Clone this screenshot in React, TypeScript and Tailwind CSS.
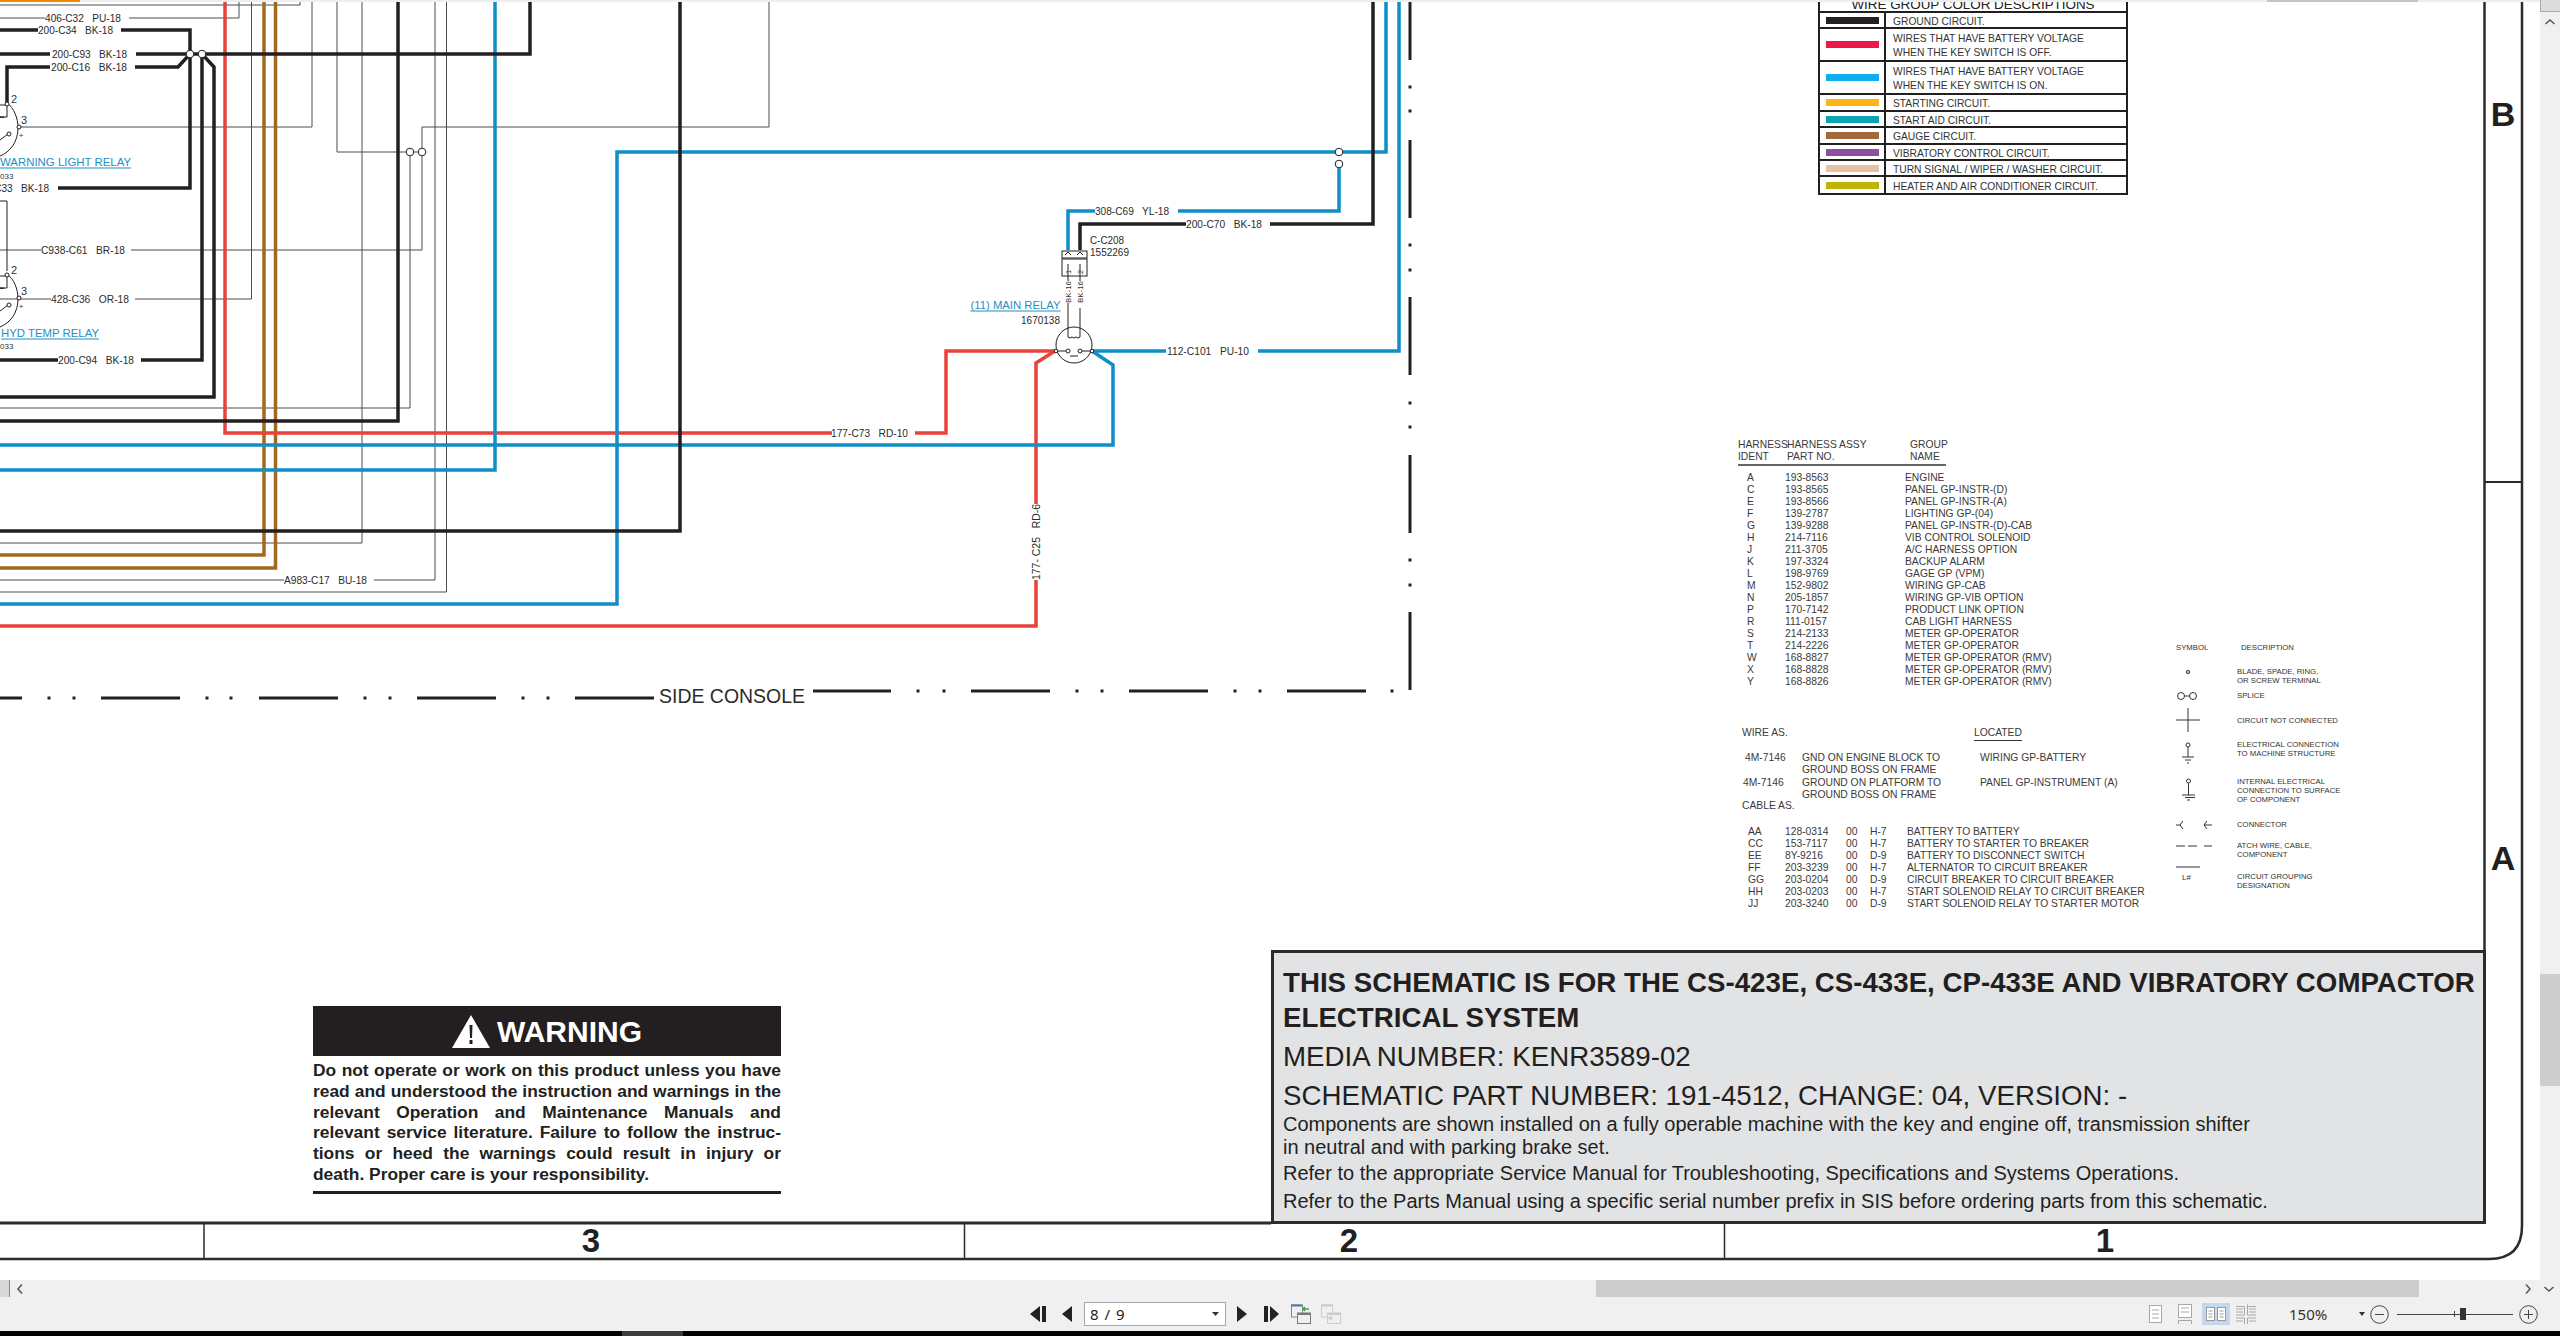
const font = "font-['Liberation_Sans',Arial,sans-serif]";

const BLACK = "#231f20";
const BLUE = "#0f8fc8";
const RED = "#e8423a";
const BROWN = "#a0691e";
const THIN = "#4d4d4d";

const wires: [string, string, number][] = [
  ["M0 5H300V0", THIN, 1],
  ["M0 18H45M129 18H239V0", THIN, 1],
  ["M19 127H312V0", THIN, 1],
  ["M0 250H41M131 250H422V127H769V0", THIN, 1],
  ["M337 0V152H422", THIN, 1],
  ["M410 152V408H0", THIN, 1],
  ["M0 299H51M135 299H251.5V0", THIN, 1],
  ["M362 0V543H0", THIN, 1],
  ["M435 0V580H374M284 580H0", THIN, 1],
  ["M446.5 0V592H0", THIN, 1],
  ["M264 0V555H0", BROWN, 3.5],
  ["M275.5 0V568H0", BROWN, 3.5],
  ["M225 0V433H832M915 433H946V351H1055", RED, 3.5],
  ["M1055 351L1036 363V504M1036 580V626H0", RED, 3.5],
  ["M1386 0V152H617V604H0", BLUE, 3.5],
  ["M0 470H495V0", BLUE, 3.5],
  ["M0 445H1113V365L1092 351", BLUE, 3.5],
  ["M1339 164V211H1178M1095 211H1068V250", BLUE, 3.5],
  ["M1092 351H1166M1258 351H1399V0", BLUE, 3.5],
  ["M0 30H38M121 30H190V188H58", BLACK, 3.5],
  ["M0 54H50M136 54H530V0", BLACK, 3.5],
  ["M7 103V67H50M135 67H178L190 54", BLACK, 3.5],
  ["M202 54V360H141M58 360H0", BLACK, 3.5],
  ["M202 54L214 67V397H0", BLACK, 3.5],
  ["M398 0V421H0", BLACK, 3.5],
  ["M680 0V531H0", BLACK, 3.5],
  ["M1373 0V224H1270M1186 224H1080V250", BLACK, 3.5],
];

const labels: [string, number, number, number][] = [
  ["406-C32   PU-18", 45, 18, 76],
  ["200-C34   BK-18", 38, 30, 75],
  ["200-C93   BK-18", 52, 54, 75],
  ["200-C16   BK-18", 51, 67, 76],
  ["200-C33   BK-18", -26, 188, 75],
  ["C938-C61   BR-18", 41, 250, 84],
  ["428-C36   OR-18", 51, 299, 78],
  ["200-C94   BK-18", 58, 360, 76],
  ["A983-C17   BU-18", 284, 580, 83],
  ["177-C73   RD-10", 831, 433, 77],
  ["308-C69   YL-18", 1095, 211, 74],
  ["200-C70   BK-18", 1186, 224, 76],
  ["112-C101   PU-10", 1167, 351, 82],
  ["C-C208", 1090, 240, 34],
  ["1552269", 1090, 252, 39],
  ["1670138", 1021, 320, 39],
];

const links: [string, number, number, number][] = [
  ["WARNING LIGHT RELAY", 0, 162, 131],
  ["HYD TEMP RELAY", 1, 333, 98],
  ["(11) MAIN RELAY", 970.5, 305, 90],
];

// dashes of the side console border
const vDash = [[0, 60], [140, 218], [297, 375], [455, 533], [612, 690]];
const vDots = [87, 111, 245, 270, 403, 427, 560, 585];
const hDashLeft = [[0, 22], [101, 180], [259, 338], [417, 496], [575, 654]];
const hDotsLeft = [49, 74, 207, 231, 365, 390, 523, 548];
const hDashRight = [[813, 891], [971, 1050], [1129, 1208], [1287, 1366]];
const hDotsRight = [918, 944, 1077, 1102, 1235, 1260, 1392];

const splices = [[190, 54], [202, 54], [410, 152], [422, 152], [1339, 152], [1339, 164]];

function Relay({ dy }: { dy: number }) {
  return (
    <g transform={`translate(0 ${dy})`} fill="none" stroke={BLACK} strokeWidth="1">
      <path d="M7 103C14 108 18 118 18 128C18 142 10 152 0 156" />
      <path d="M0 105H7V117H0M0 118q1 -3 2 0q1 -3 2 0" />
      <path d="M0 140L8 134" />
      <circle cx="9" cy="134" r="2" fill="white" />
      <circle cx="7" cy="104" r="2" fill="white" />
      <circle cx="19" cy="127" r="2" fill="white" />
      <text x="14" y="99" fontSize="11" fill="#333" stroke="none" textAnchor="middle" dominantBaseline="central">2</text>
      <text x="24" y="120" fontSize="11" fill="#333" stroke="none" textAnchor="middle" dominantBaseline="central">3</text>
      <text x="21" y="135" fontSize="8" fill="#333" stroke="none" textAnchor="middle" dominantBaseline="central">+</text>
    </g>
  );
}

function Schematic() {
  return (
    <svg width="2540" height="1280" viewBox="0 0 2540 1280" className={`absolute left-0 top-0 ${font}`}>
      {wires.map(([d, color, w], i) => (
        <path key={i} d={d} fill="none" stroke={color} strokeWidth={w} />
      ))}

      {splices.map(([x, y], i) => (
        <circle key={i} cx={x} cy={y} r="3.8" fill="white" stroke={BLACK} strokeWidth="1" />
      ))}

      {labels.map(([t, x, y, w], i) => (
        <text key={i} x={x} y={y} fontSize="10.5" fill="#2b2b2b" dominantBaseline="central" textLength={w} lengthAdjust="spacingAndGlyphs" className="whitespace-pre">
          {t}
        </text>
      ))}

      {links.map(([t, x, y, w], i) => (
        <g key={i}>
          <text x={x} y={y} fontSize="11.5" fill="#1f8fc4" dominantBaseline="central" textLength={w} lengthAdjust="spacingAndGlyphs">
            {t}
          </text>
          <path d={`M${x} ${y + 6}h${w}`} stroke="#1f8fc4" strokeWidth="1" />
        </g>
      ))}

      <text x="0" y="176" fontSize="8" fill="#333" dominantBaseline="central">033</text>
      <text x="0" y="346" fontSize="8" fill="#333" dominantBaseline="central">033</text>
      <Relay dy={0} />
      <Relay dy={171} />
      <path d="M0 201H7V271" fill="none" stroke={BLACK} strokeWidth="1" />

      {/* main relay and connector */}
      <g fill="none" stroke={BLACK} strokeWidth="1">
        <rect x="1062" y="251" width="25" height="7" />
        <rect x="1062" y="259" width="25" height="17" />
        <path d="M1068 264V276M1080 264V276M1065 255l3 -3l3 3M1077 255l3 -3l3 3M1068 303V328M1080 308V328" />
        <path d="M1068 276V281M1080 276V281" />
        <circle cx="1074" cy="345" r="18" />
        <path d="M1068 328V337q2 2 4 0q2 2 4 0q2 2 4 0V328" />
        <path d="M1057 351H1066M1082 351H1091M1070 356H1078" />
        <circle cx="1068" cy="351" r="2" fill="white" />
        <circle cx="1080" cy="351" r="2" fill="white" />
        <circle cx="1056" cy="351" r="1.8" fill="white" />
        <circle cx="1092" cy="351" r="1.8" fill="white" />
      </g>
      <text transform="rotate(-90 1068 303)" x="1068" y="303" fontSize="7.5" fill="#333" dominantBaseline="central" textLength="22" lengthAdjust="spacingAndGlyphs">BK-16</text>
      <text transform="rotate(-90 1080 303)" x="1080" y="303" fontSize="7.5" fill="#333" dominantBaseline="central" textLength="22" lengthAdjust="spacingAndGlyphs">BK-16</text>
      <text transform="rotate(-90 1068 274)" x="1068" y="274" fontSize="7.5" fill="#333" dominantBaseline="central">1</text>
      <text transform="rotate(-90 1080 274)" x="1080" y="274" fontSize="7.5" fill="#333" dominantBaseline="central">2</text>
      <text transform="rotate(-90 1036 580)" x="1036" y="580" fontSize="10.5" fill="#2b2b2b" dominantBaseline="central" textLength="76" lengthAdjust="spacingAndGlyphs" className="whitespace-pre">177- C25   RD-6</text>

      {/* side console border */}
      <g stroke={BLACK} strokeWidth="3" fill="none">
        {vDash.map(([a, b], i) => <path key={i} d={`M1410 ${a}V${b}`} />)}
        {vDots.map((y, i) => <path key={i} d={`M1410 ${y - 1.5}V${y + 1.5}`} />)}
        {hDashLeft.map(([a, b], i) => <path key={i} d={`M${a} 698H${b}`} />)}
        {hDotsLeft.map((x, i) => <path key={i} d={`M${x - 1.5} 698h3`} />)}
        {hDashRight.map(([a, b], i) => <path key={i} d={`M${a} 691H${b}`} />)}
        {hDotsRight.map((x, i) => <path key={i} d={`M${x - 1.5} 691h3`} />)}
      </g>
      <text x="659" y="696" fontSize="20" fill="#2b2b2b" dominantBaseline="central" textLength="146" lengthAdjust="spacingAndGlyphs">SIDE CONSOLE</text>

      {/* drawing frame */}
      <g stroke="#2b2b2b" fill="none">
        <path d="M2484.5 0V950" strokeWidth="2.5" />
        <path d="M2484.5 482H2522" strokeWidth="2" />
        <path d="M0 1223H1271" strokeWidth="3" />
        <path d="M0 1259H2489Q2522 1259 2522 1226V0" strokeWidth="2.5" />
        <path d="M204 1223V1259M964.5 1223V1259M1724.5 1223V1259" strokeWidth="1.5" />
      </g>
      <text x="591" y="1240" fontSize="33" fontWeight="700" fill={BLACK} textAnchor="middle" dominantBaseline="central">3</text>
      <text x="1349" y="1240" fontSize="33" fontWeight="700" fill={BLACK} textAnchor="middle" dominantBaseline="central">2</text>
      <text x="2105" y="1240" fontSize="33" fontWeight="700" fill={BLACK} textAnchor="middle" dominantBaseline="central">1</text>
      <text x="2503" y="114" fontSize="34" fontWeight="700" fill={BLACK} textAnchor="middle" dominantBaseline="central">B</text>
      <text x="2503" y="858" fontSize="34" fontWeight="700" fill={BLACK} textAnchor="middle" dominantBaseline="central">A</text>

      {/* symbol legend drawings */}
      <g fill="none" stroke="#333" strokeWidth="1">
        <circle cx="2188" cy="672" r="1.5" strokeWidth="1.2" />
        <circle cx="2181" cy="696" r="3.5" />
        <circle cx="2193" cy="696" r="3.5" />
        <path d="M2184.5 696H2189.5" />
        <path d="M2176 720H2200M2188 708V732" />
        <circle cx="2188" cy="745" r="2" />
        <path d="M2188 747V757M2182 757H2194M2185 760H2191M2187 763H2189" />
        <circle cx="2188.5" cy="781" r="2" />
        <path d="M2188.5 783V795M2182 795H2195M2185 797.5H2195M2187 800H2190" />
        <path d="M2176 825H2180M2183 821L2180 825L2183 829M2207 821L2204 825L2207 829M2204 825H2212" />
        <path d="M2176 846H2185M2188 846H2197M2204 846H2212M2176 867H2200" />
      </g>
      <text x="2182" y="877" fontSize="8" fill="#333" dominantBaseline="central">L#</text>
    </svg>
  );
}

const colorRows = [
  { color: "#231f20", h: "h-[16px]", text: ["GROUND CIRCUIT."] },
  { color: "#ed1847", h: "h-[33px]", text: ["WIRES THAT HAVE BATTERY VOLTAGE", "WHEN THE KEY SWITCH IS OFF."] },
  { color: "#0daeef", h: "h-[33px]", text: ["WIRES THAT HAVE BATTERY VOLTAGE", "WHEN THE KEY SWITCH IS ON."] },
  { color: "#fdb515", h: "h-[17px]", text: ["STARTING CIRCUIT."] },
  { color: "#0aa4b4", h: "h-[16px]", text: ["START AID CIRCUIT."] },
  { color: "#a5683a", h: "h-[17px]", text: ["GAUGE CIRCUIT."] },
  { color: "#8d4fa0", h: "h-[16px]", text: ["VIBRATORY CONTROL CIRCUIT."] },
  { color: "#e6c1a4", h: "h-[16px]", text: ["TURN SIGNAL / WIPER / WASHER CIRCUIT."] },
  { color: "#bdb40a", h: "h-[16px]", text: ["HEATER AND AIR CONDITIONER CIRCUIT."] },
];

function WireColors() {
  return (
    <div className="absolute left-[1818px] top-[-2px] flex w-[310px] flex-col border-x-2 border-b-2 border-[#231f20] text-[10.25px] text-[#333]">
      <div className="flex h-[15px] items-center justify-center whitespace-nowrap border-b-2 border-[#231f20] pt-[1px] text-[13.4px] text-[#222]">
        WIRE GROUP COLOR DESCRIPTIONS
      </div>
      {colorRows.map((r, i) => (
        <div key={i} className={`flex ${r.h} border-b-2 border-[#231f20] last:border-b-0`}>
          <div className="flex w-[66px] shrink-0 items-center justify-center border-r-2 border-[#231f20]">
            <div className="h-[7px] w-[53px]" style={{ backgroundColor: r.color }} />
          </div>
          <div className="flex flex-col justify-center pl-[7px] pt-[3px] leading-[14px]">
            {r.text.map((t) => (
              <span key={t}>{t}</span>
            ))}
          </div>
        </div>
      ))}
    </div>
  );
}

const harness = [
  ["A", "193-8563", "ENGINE"],
  ["C", "193-8565", "PANEL GP-INSTR-(D)"],
  ["E", "193-8566", "PANEL GP-INSTR-(A)"],
  ["F", "139-2787", "LIGHTING GP-(04)"],
  ["G", "139-9288", "PANEL GP-INSTR-(D)-CAB"],
  ["H", "214-7116", "VIB CONTROL SOLENOID"],
  ["J", "211-3705", "A/C HARNESS OPTION"],
  ["K", "197-3324", "BACKUP ALARM"],
  ["L", "198-9769", "GAGE GP (VPM)"],
  ["M", "152-9802", "WIRING GP-CAB"],
  ["N", "205-1857", "WIRING GP-VIB OPTION"],
  ["P", "170-7142", "PRODUCT LINK OPTION"],
  ["R", "111-0157", "CAB LIGHT HARNESS"],
  ["S", "214-2133", "METER GP-OPERATOR"],
  ["T", "214-2226", "METER GP-OPERATOR"],
  ["W", "168-8827", "METER GP-OPERATOR (RMV)"],
  ["X", "168-8828", "METER GP-OPERATOR (RMV)"],
  ["Y", "168-8826", "METER GP-OPERATOR (RMV)"],
];

function HarnessTable() {
  return (
    <div className="absolute left-[1738px] top-[439px] flex flex-col text-[10.3px] leading-[12px] text-[#3a3a3a]">
      <div className="grid w-[208px] grid-cols-[49px_123px_1fr] border-b-2 border-[#666] pb-[1px]">
        <span className="whitespace-nowrap">HARNESS</span>
        <span className="whitespace-nowrap">HARNESS ASSY</span>
        <span>GROUP</span>
        <span>IDENT</span>
        <span>PART NO.</span>
        <span>NAME</span>
      </div>
      <div className="mt-[6px] grid grid-cols-[38px_120px_1fr] pl-[9px]">
        {harness.map(([a, b, c]) => (
          <div key={a} className="contents">
            <span>{a}</span>
            <span>{b}</span>
            <span className="whitespace-nowrap">{c}</span>
          </div>
        ))}
      </div>
    </div>
  );
}

const cables = [
  ["AA", "128-0314", "00", "H-7", "BATTERY TO BATTERY"],
  ["CC", "153-7117", "00", "H-7", "BATTERY TO STARTER TO BREAKER"],
  ["EE", "8Y-9216", "00", "D-9", "BATTERY TO DISCONNECT SWITCH"],
  ["FF", "203-3239", "00", "H-7", "ALTERNATOR TO CIRCUIT BREAKER"],
  ["GG", "203-0204", "00", "D-9", "CIRCUIT BREAKER TO CIRCUIT BREAKER"],
  ["HH", "203-0203", "00", "H-7", "START SOLENOID RELAY TO CIRCUIT BREAKER"],
  ["JJ", "203-3240", "00", "D-9", "START SOLENOID RELAY TO STARTER MOTOR"],
];

function WireCable() {
  return (
    <div className="absolute left-[1742px] top-[727px] w-[400px] text-[10.3px] leading-[11.5px] text-[#3a3a3a]">
      <div className="flex h-[14px]">
        <span className="w-[232px]">WIRE AS.</span>
        <span className="border-b border-[#333]">LOCATED</span>
      </div>
      <div className="mt-[11px] flex h-[23px]">
        <span className="w-[60px] pl-[3px]">4M-7146</span>
        <span className="w-[178px]">GND ON ENGINE BLOCK TO<br />GROUND BOSS ON FRAME</span>
        <span>WIRING GP-BATTERY</span>
      </div>
      <div className="mt-[2px] flex h-[23px]">
        <span className="w-[60px] pl-[1px]">4M-7146</span>
        <span className="w-[178px]">GROUND ON PLATFORM TO<br />GROUND BOSS ON FRAME</span>
        <span>PANEL GP-INSTRUMENT (A)</span>
      </div>
      <div className="h-[12px]">CABLE AS.</div>
      <div className="mt-[14px] grid grid-cols-[37px_61px_24px_37px_1fr] pl-[6px] leading-[12px]">
        {cables.map((c) => (
          <div key={c[0]} className="contents">
            {c.map((v, i) => (
              <span key={i} className="whitespace-nowrap">{v}</span>
            ))}
          </div>
        ))}
      </div>
    </div>
  );
}

const symbolRows: [string, string[]][] = [
  ["mt-[15px]", ["BLADE, SPADE, RING,", "OR SCREW TERMINAL"]],
  ["mt-[6px]", ["SPLICE"]],
  ["mt-[16px]", ["CIRCUIT NOT CONNECTED"]],
  ["mt-[15px]", ["ELECTRICAL CONNECTION", "TO MACHINE STRUCTURE"]],
  ["mt-[19px]", ["INTERNAL ELECTRICAL", "CONNECTION TO SURFACE", "OF COMPONENT"]],
  ["mt-[16px]", ["CONNECTOR"]],
  ["mt-[12px]", ["ATCH WIRE, CABLE,", "COMPONENT"]],
  ["mt-[13px]", ["CIRCUIT GROUPING", "DESIGNATION"]],
];

function SymbolLegend() {
  return (
    <div className="absolute left-[2176px] top-[643px] w-[200px] text-[7.75px] leading-[9px] text-[#333]">
      <div className="flex">
        <span className="w-[65px]">SYMBOL</span>
        <span>DESCRIPTION</span>
      </div>
      <div className="ml-[61px] flex flex-col">
        {symbolRows.map(([cls, lines], i) => (
          <div key={i} className={`flex flex-col ${cls}`}>
            {lines.map((l) => (
              <span key={l} className="whitespace-nowrap">{l}</span>
            ))}
          </div>
        ))}
      </div>
    </div>
  );
}

function TitleBlock() {
  return (
    <div className="absolute left-[1271px] top-[950px] h-[274px] w-[1215px] border-[3px] border-[#2b2b2b] bg-[#e2e3e5] pl-[9px] pt-[13px] text-[#231f20]">
      <div className="flex h-[34px] items-center whitespace-nowrap text-[27.7px] font-bold">
        THIS SCHEMATIC IS FOR THE CS-423E, CS-433E, CP-433E AND VIBRATORY COMPACTOR
      </div>
      <div className="flex h-[36px] items-center text-[27.7px] font-bold">ELECTRICAL SYSTEM</div>
      <div className="flex h-[42px] items-center text-[27.7px]">MEDIA NUMBER: KENR3589-02</div>
      <div className="flex h-[36px] items-center text-[27.7px]">SCHEMATIC PART NUMBER: 191-4512, CHANGE: 04, VERSION: -</div>
      <div className="flex h-[20px] items-center text-[20px]">Components are shown installed on a fully operable machine with the key and engine off, transmission shifter</div>
      <div className="flex h-[26px] items-center text-[20px]">in neutral and with parking brake set.</div>
      <div className="flex h-[26px] items-center text-[20px]">Refer to the appropriate Service Manual for Troubleshooting, Specifications and Systems Operations.</div>
      <div className="flex h-[29px] items-center text-[20px]">Refer to the Parts Manual using a specific serial number prefix in SIS before ordering parts from this schematic.</div>
    </div>
  );
}

const warningLines = [
  "Do not operate or work on this product unless you have",
  "read and understood the instruction and warnings in the",
  "relevant Operation and Maintenance Manuals and",
  "relevant service literature. Failure to follow the instruc-",
  "tions or heed the warnings could result in injury or",
];

function Warning() {
  return (
    <div className="absolute left-[313px] top-[1006px] w-[468px] text-[#231f20]">
      <div className="flex h-[50px] items-center justify-center gap-[7px] bg-[#231f20] pt-[1px] text-[30px] font-bold text-white">
        <svg width="38" height="33" viewBox="0 0 38 33">
          <path d="M19 0L38 33H0Z" fill="white" />
          <path d="M17.5 10H20.5L20 23H18Z" fill="#231f20" />
          <rect x="17.5" y="25" width="3" height="4" fill="#231f20" />
        </svg>
        WARNING
      </div>
      <div className="border-b-[3px] border-[#231f20] pb-[6px] pt-[4px] text-[17.4px] font-bold leading-[20.8px]">
        {warningLines.map((l) => (
          <div key={l} className="text-justify [text-align-last:justify]">{l}</div>
        ))}
        <div>death. Proper care is your responsibility.</div>
      </div>
    </div>
  );
}

function Tri({ dir, className }: { dir: "l" | "r"; className?: string }) {
  return (
    <svg width="10" height="16" viewBox="0 0 10 16" className={className}>
      <path d={dir === "l" ? "M10 0V16L0 8Z" : "M0 0V16L10 8Z"} fill="#222" />
    </svg>
  );
}

function PageIcon({ muted, className }: { muted?: boolean; className?: string }) {
  return (
    <svg width="20" height="20" viewBox="0 0 20 20" className={className}>
      <rect x="0.5" y="1" width="11" height="12" fill="none" stroke={muted ? "#ccc" : "#888"} />
      <path d="M0 1.5H11" stroke={muted ? "#ccc" : "#4a78b0"} strokeWidth="2" />
      <rect x="6.5" y="9" width="13" height="10.5" fill="#f0f0f0" stroke={muted ? "#ccc" : "#777"} />
      <path d="M6 10H20" stroke={muted ? "#ccc" : "#777"} strokeWidth="2" />
      <path d={muted ? "M6 14H11M9 12L11 14L9 16" : "M18 5H12M14 3L12 5L14 7"} fill="none" stroke={muted ? "#bcd8c4" : "#3aa35a"} strokeWidth="1.5" />
    </svg>
  );
}

const docGray = "#a8a8a8";

function Toolbar() {
  return (
    <div className={`flex h-[34px] shrink-0 items-center bg-[#f0f0f0] pl-[1030px] ${font}`}>
      <svg width="16" height="16" viewBox="0 0 16 16" className="shrink-0">
        <path d="M10 0V16L0 8Z" fill="#222" />
        <rect x="12" y="0" width="4" height="16" fill="#222" />
      </svg>
      <Tri dir="l" className="ml-[16px] shrink-0" />
      <div className="ml-[12px] flex h-[24px] w-[142px] shrink-0 items-center justify-between border border-[#a6a6a6] bg-white pl-[5px] pr-[6px] font-['Noto_Sans',sans-serif] text-[15px] tracking-[1px] text-[#222]">
        8 / 9
        <svg width="7" height="4" viewBox="0 0 7 4"><path d="M0 0H7L3.5 4Z" fill="#333" /></svg>
      </div>
      <Tri dir="r" className="ml-[11px] shrink-0" />
      <svg width="15" height="16" viewBox="0 0 15 16" className="ml-[17px] shrink-0">
        <rect x="0" y="0" width="4" height="16" fill="#222" />
        <path d="M6 0V16L15 8Z" fill="#222" />
      </svg>
      <PageIcon className="ml-[12px] shrink-0" />
      <PageIcon muted className="ml-[10px] shrink-0" />

      {/* page layout buttons */}
      <svg width="13" height="20" viewBox="0 0 13 20" className="ml-[808px] shrink-0" fill="none" stroke={docGray}>
        <rect x="0.5" y="1.5" width="12" height="17" fill="white" />
        <path d="M3 6H10M3 10H10M3 14H10" />
      </svg>
      <svg width="14" height="20" viewBox="0 0 14 20" className="ml-[16px] shrink-0" fill="none" stroke={docGray}>
        <rect x="0.5" y="0.5" width="13" height="13" fill="white" />
        <path d="M3 4H11M3 8H11M0.5 16.5H13.5V20M0.5 16.5V20" />
      </svg>
      <div className="ml-[10px] flex h-[22px] w-[28px] shrink-0 items-center justify-center bg-[#c5d7ee]">
        <svg width="20" height="14" viewBox="0 0 20 14" fill="none" stroke="#999">
          <rect x="0.5" y="0.5" width="8" height="13" fill="white" />
          <rect x="11.5" y="0.5" width="8" height="13" fill="white" />
          <path d="M2.5 4H6.5M2.5 7H6.5M2.5 10H6.5M13.5 4H17.5M13.5 7H17.5M13.5 10H17.5" />
        </svg>
      </div>
      <svg width="20" height="20" viewBox="0 0 20 20" className="ml-[6px] shrink-0" fill="none" stroke={docGray}>
        <path d="M0 2.5H8.5V11H0M11.5 0.5V11H20M20 2.5H11.5M0 5H7M13 5H20M0 8H7M13 8H20M0 14H8.5V20M20 14H11.5V20M0 17H7M13 17H20" />
      </svg>

      {/* zoom */}
      <span className="ml-[33px] w-[39px] shrink-0 font-['Noto_Sans',sans-serif] text-[15px] text-[#333]">150%</span>
      <svg width="6" height="4" viewBox="0 0 6 4" className="ml-[31px] shrink-0"><path d="M0 0H6L3 4Z" fill="#333" /></svg>
      <svg width="19" height="19" viewBox="0 0 19 19" className="ml-[5px] shrink-0" fill="none" stroke="#444">
        <circle cx="9.5" cy="9.5" r="8.8" />
        <path d="M5 9.5H14" />
      </svg>
      <div className="relative ml-[8px] h-[12px] w-[116px] shrink-0">
        <div className="absolute left-0 right-0 top-[5.5px] h-px bg-[#444]" />
        <div className="absolute left-[57px] top-[3px] h-[6px] w-px bg-[#444]" />
        <div className="absolute left-[63px] top-0 h-[12px] w-[6px] bg-[#333]" />
      </div>
      <svg width="19" height="19" viewBox="0 0 19 19" className="ml-[6px] shrink-0" fill="none" stroke="#444">
        <circle cx="9.5" cy="9.5" r="8.8" />
        <path d="M5 9.5H14M9.5 5V14" />
      </svg>
    </div>
  );
}

function HorizontalBar() {
  return (
    <div className="flex h-[17px] shrink-0 items-center bg-[#f0f0f0]">
      <div className="h-[18px] w-[10px] shrink-0 border-r border-[#888] bg-[#d8d8d8]" />
      <svg width="8" height="10" viewBox="0 0 8 10" className="ml-[6px] shrink-0" fill="none" stroke="#555" strokeWidth="1.5">
        <path d="M6 0.5L2 5L6 9.5" />
      </svg>
      <div className="ml-[1572px] h-[17px] w-[823px] shrink-0 bg-[#cdcdcd]" />
      <svg width="8" height="10" viewBox="0 0 8 10" className="ml-[105px] shrink-0" fill="none" stroke="#555" strokeWidth="1.5">
        <path d="M2 0.5L6 5L2 9.5" />
      </svg>
      <svg width="10" height="8" viewBox="0 0 10 8" className="ml-[12px] shrink-0" fill="none" stroke="#555" strokeWidth="1.5">
        <path d="M0.5 2L5 6L9.5 2" />
      </svg>
    </div>
  );
}

function VerticalBar() {
  return (
    <div className="flex w-[20px] shrink-0 flex-col items-center bg-[#f0f0f0]">
      <div className="h-[12px] w-full border-b border-l border-[#aaa] bg-[#dcdcdc]" />
      <svg width="10" height="8" viewBox="0 0 10 8" className="mt-[6px]" fill="none" stroke="#555" strokeWidth="1.5">
        <path d="M0.5 6L5 2L9.5 6" />
      </svg>
      <div className="mt-[948px] h-[112px] w-full bg-[#cdcdcd]" />
    </div>
  );
}

export default function App() {
  return (
    <div className={`flex h-[1336px] w-[2560px] flex-col overflow-hidden bg-white ${font}`}>
      <div className="flex h-[1280px] shrink-0">
        <div className="relative w-[2540px] shrink-0 overflow-hidden bg-white">
          <Schematic />
          <WireColors />
          <HarnessTable />
          <WireCable />
          <SymbolLegend />
          <TitleBlock />
          <Warning />
          {/* strip of the pane above */}
          <div className="absolute left-0 right-0 top-0 flex h-[2px] bg-[#eeeeee]">
            <div className="h-full w-[80px] bg-[#f08c00]" />
            <div className="ml-[2187px] h-full w-[151px] bg-[#c4c4c4]" />
          </div>
        </div>
        <VerticalBar />
      </div>
      <HorizontalBar />
      <Toolbar />
      <div className="flex h-[5px] shrink-0 bg-black">
        <div className="ml-[622px] h-full w-[61px] bg-[#3c3c3c]" />
      </div>
    </div>
  );
}
